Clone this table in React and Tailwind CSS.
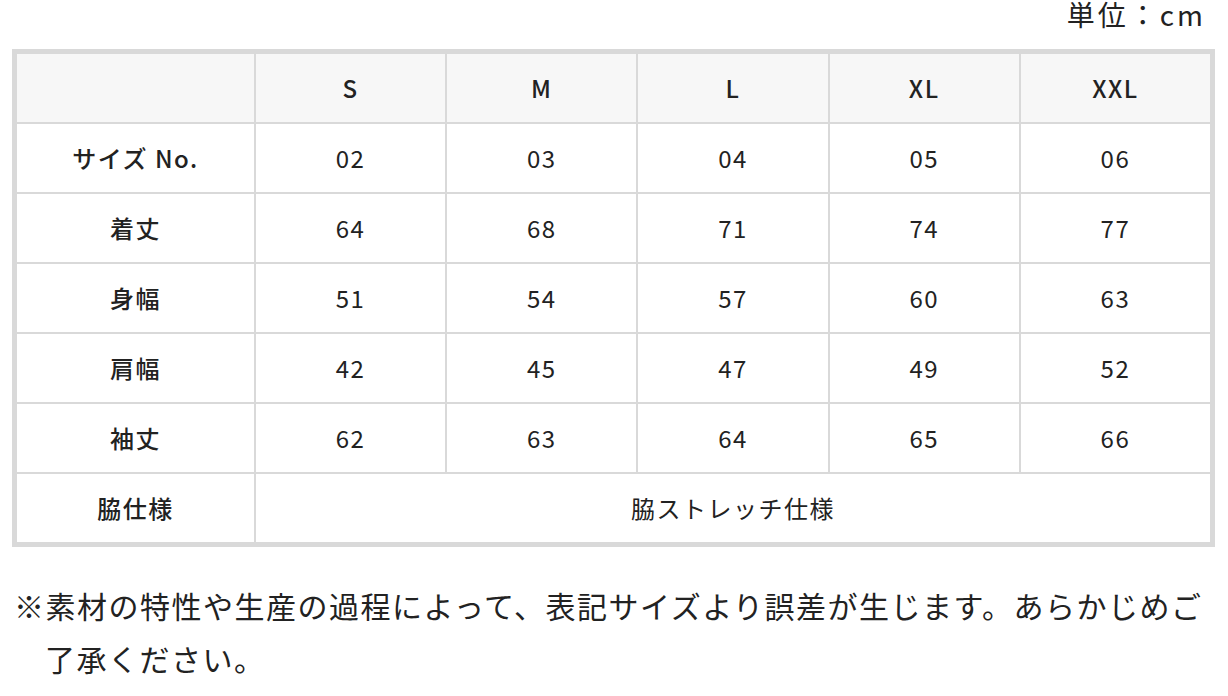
const sizes = ["S", "M", "L", "XL", "XXL"];

const rows = [
    { label: "サイズ No.", values: ["02", "03", "04", "05", "06"] },
    { label: "着丈", values: ["64", "68", "71", "74", "77"] },
    { label: "身幅", values: ["51", "54", "57", "60", "63"] },
    { label: "肩幅", values: ["42", "45", "47", "49", "52"] },
    { label: "袖丈", values: ["62", "63", "64", "65", "66"] },
];

const cell = "bg-white h-[68px] flex items-center justify-center";

const App = () => {
    return (
        <div className="w-[1228px] h-[696px] overflow-hidden bg-white text-[#222] font-['Noto_Sans_CJK_JP','Noto_Sans',sans-serif]">
            <div className="h-[49px] pr-[22px] text-right text-[28px] leading-[28px] tracking-[3px]">
                単位：cm
            </div>

            <div className="ml-[12px] mr-[13px] bg-[#d9d9d9] p-[5px] grid grid-cols-[237px_repeat(5,1fr)] gap-[2px] text-[24px] tracking-[1.5px]">
                <div className="bg-[#f7f7f7] h-[68px]" />
                {sizes.map((size) => (
                    <div
                        key={size}
                        className="bg-[#f7f7f7] h-[68px] flex items-center justify-center font-medium"
                    >
                        {size}
                    </div>
                ))}

                {rows.map((row) => (
                    <div key={row.label} className="contents">
                        <div className={`${cell} font-medium`}>{row.label}</div>
                        {row.values.map((value, i) => (
                            <div key={i} className={cell}>
                                {value}
                            </div>
                        ))}
                    </div>
                ))}

                <div className={`${cell} font-medium`}>脇仕様</div>
                <div className={`${cell} col-span-5`}>脇ストレッチ仕様</div>
            </div>

            <p className="mt-[32px] pl-[45px] pr-[20px] -indent-[31px] text-[30px] leading-[53px] tracking-[1.5px]">
                ※素材の特性や生産の過程によって、表記サイズより誤差が生じます。あらかじめご了承ください。
            </p>
        </div>
    );
};

export default App;
